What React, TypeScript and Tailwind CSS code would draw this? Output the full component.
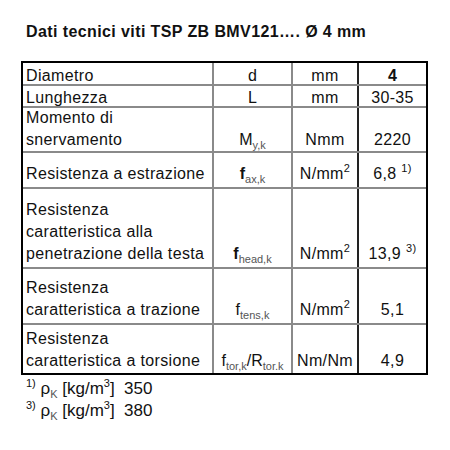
import type { ReactNode } from 'react';

const font = { fontFamily: '"Liberation Sans", Arial, sans-serif' };

function Sub({ children }: { children: ReactNode }) {
  return <span className="relative top-[4px] text-[11px] leading-none text-[#555]">{children}</span>;
}

function Sup({ children }: { children: ReactNode }) {
  return <span className="relative -top-[7px] text-[11px] leading-none">{children}</span>;
}

interface Riga {
  h: string;
  off: string;
  nome: ReactNode;
  simbolo: ReactNode;
  unita: ReactNode;
  valore: ReactNode;
}

// le altezze includono il bordo superiore di 2px (border-box)
const righe: Riga[] = [
  { h: 'h-[21px]', off: 'mb-[-3px]', nome: 'Diametro', simbolo: 'd', unita: 'mm', valore: <b>4</b> },
  { h: 'h-[22px]', off: 'mb-[-3px]', nome: 'Lunghezza', simbolo: 'L', unita: 'mm', valore: '30-35' },
  {
    h: 'h-[45px]',
    off: 'mb-0',
    nome: <>Momento di<br />snervamento</>,
    simbolo: <>M<Sub>y,k</Sub></>,
    unita: 'Nmm',
    valore: '2220',
  },
  {
    h: 'h-[36px]',
    off: 'mb-[2px]',
    nome: 'Resistenza a estrazione',
    simbolo: <><b>f</b><Sub>ax,k</Sub></>,
    unita: <>N/mm<Sup>2</Sup></>,
    valore: <>6,8 <Sup>1)</Sup></>,
  },
  {
    h: 'h-[80px]',
    off: 'mb-[2px]',
    nome: <>Resistenza<br />caratteristica alla<br />penetrazione della testa</>,
    simbolo: <><b>f</b><Sub>head,k</Sub></>,
    unita: <>N/mm<Sup>2</Sup></>,
    valore: <>13,9 <Sup>3)</Sup></>,
  },
  {
    h: 'h-[56px]',
    off: 'mb-[2px]',
    nome: <>Resistenza<br />caratteristica a trazione</>,
    simbolo: <>f<Sub>tens,k</Sub></>,
    unita: <>N/mm<Sup>2</Sup></>,
    valore: '5,1',
  },
  {
    h: 'h-[50px]',
    off: 'mb-[1px]',
    nome: <>Resistenza<br />caratteristica a torsione</>,
    simbolo: <>f<Sub>tor,k</Sub>/R<Sub>tor.k</Sub></>,
    unita: 'Nm/Nm',
    valore: '4,9',
  },
];

export default function App() {
  return (
    <div className="w-[450px] h-[450px] bg-white text-[#111] overflow-hidden" style={font}>
      {/* Titolo */}
      <h1 className="pt-[22px] pl-[26px] text-[16px] leading-[20px] font-bold tracking-[0.4px]">
        Dati tecnici viti TSP ZB BMV121…. Ø 4 mm
      </h1>

      {/* Tabella */}
      <div className="mt-[19px] ml-[21px] w-[407px] border-2 border-black text-[16px] leading-[22px] tracking-[0.35px]">
        {righe.map((r, i) => (
          <div key={i} className={`flex ${r.h} ${i > 0 ? 'border-t-2 border-[#8a8a8a]' : ''}`}>
            <div className="w-[189px] flex items-end pl-[3px]">
              <div className={`whitespace-nowrap ${r.off}`}>{r.nome}</div>
            </div>
            <div className="w-[79px] flex items-end justify-center border-l-2 border-[#8a8a8a]">
              <div className={`whitespace-nowrap tracking-normal ${r.off}`}>{r.simbolo}</div>
            </div>
            <div className="w-[66px] flex items-end justify-center border-l-2 border-[#8a8a8a]">
              <div className={`whitespace-nowrap ${r.off}`}>{r.unita}</div>
            </div>
            <div className="flex-1 flex items-end justify-center border-l-2 border-[#222]">
              <div className={`whitespace-nowrap ${r.off}`}>{r.valore}</div>
            </div>
          </div>
        ))}
      </div>

      {/* Note */}
      <div className="mt-[3px] pl-[26px] text-[17px] leading-[22px]">
        <div className="whitespace-pre">
          <Sup>1)</Sup> ρ<Sub>K</Sub> [kg/m<Sup>3</Sup>]  350
        </div>
        <div className="whitespace-pre">
          <Sup>3)</Sup> ρ<Sub>K</Sub> [kg/m<Sup>3</Sup>]  380
        </div>
      </div>
    </div>
  );
}
